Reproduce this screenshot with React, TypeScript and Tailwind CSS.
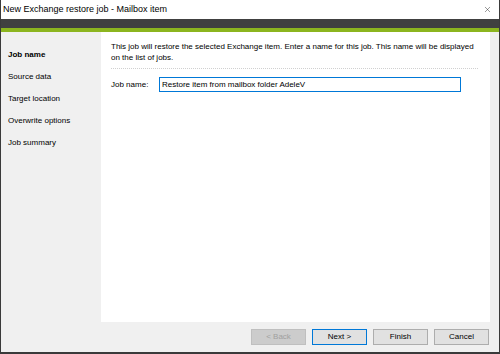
import { X } from "lucide-react";

const steps = [
  "Job name",
  "Source data",
  "Target location",
  "Overwrite options",
  "Job summary",
];

const font = { fontFamily: '"Liberation Sans", Arial, sans-serif' };

function Btn({
  label,
  kind = "normal",
}: {
  label: string;
  kind?: "normal" | "default" | "disabled";
}) {
  const cls =
    kind === "disabled"
      ? "border-[#bfbfbf] bg-[#cccccc] text-[#a0a0a0]"
      : kind === "default"
        ? "border-[#0078d7] bg-[#e1e1e1] text-black"
        : "border-[#adadad] bg-[#e1e1e1] text-black";
  return (
    <div
      className={`w-[55px] h-[16px] border flex items-center justify-center text-[8px] ${cls}`}
    >
      {label}
    </div>
  );
}

export default function App() {
  return (
    <div
      className="w-[500px] h-[354px] flex flex-col bg-[#f0f0f0] border-l border-r border-b-2 border-[#3a3a3a] text-black"
      style={font}
    >
      {/* title bar */}
      <div className="h-[19px] bg-white flex items-center justify-between pl-[2px] pr-[7px]">
        <span className="text-[9px] leading-none">
          New Exchange restore job - Mailbox item
        </span>
        <X size={9} strokeWidth={1.2} className="text-[#222]" />
      </div>
      <div className="h-[9px] bg-[#404040]" />
      <div className="h-[4px] bg-[#8cb51f]" />

      <div className="flex-1 flex">
        {/* steps */}
        <div className="w-[100px] pt-[17px] pl-[7px] flex flex-col gap-[11px] text-[8px] leading-[11px]">
          {steps.map((s, i) => (
            <div key={s} className={i === 0 ? "font-bold" : ""}>
              {s}
            </div>
          ))}
        </div>

        <div className="flex-1 flex flex-col">
          <div className="flex-1 bg-white mr-[9px] pt-[9px] pl-[10px] pr-[6px] text-[8px]">
            <p className="leading-[11px]">
              This job will restore the selected Exchange item. Enter a name for
              this job. This name will be displayed on the list of jobs.
            </p>
            <div className="mt-[5px] mr-[6px] border-t border-dotted border-[#d0d0d0]" />
            <div className="mt-[8px] flex items-center">
              <span className="w-[48px]">Job name:</span>
              <div className="w-[302px] h-[15px] border border-[#0078d7] flex items-center px-[2px]">
                Restore item from mailbox folder AdeleV
              </div>
            </div>
          </div>
          <div className="h-[30px] flex items-center justify-end gap-[6px] pr-[10px]">
            <Btn label="< Back" kind="disabled" />
            <Btn label="Next >" kind="default" />
            <Btn label="Finish" />
            <Btn label="Cancel" />
          </div>
        </div>
      </div>
    </div>
  );
}
